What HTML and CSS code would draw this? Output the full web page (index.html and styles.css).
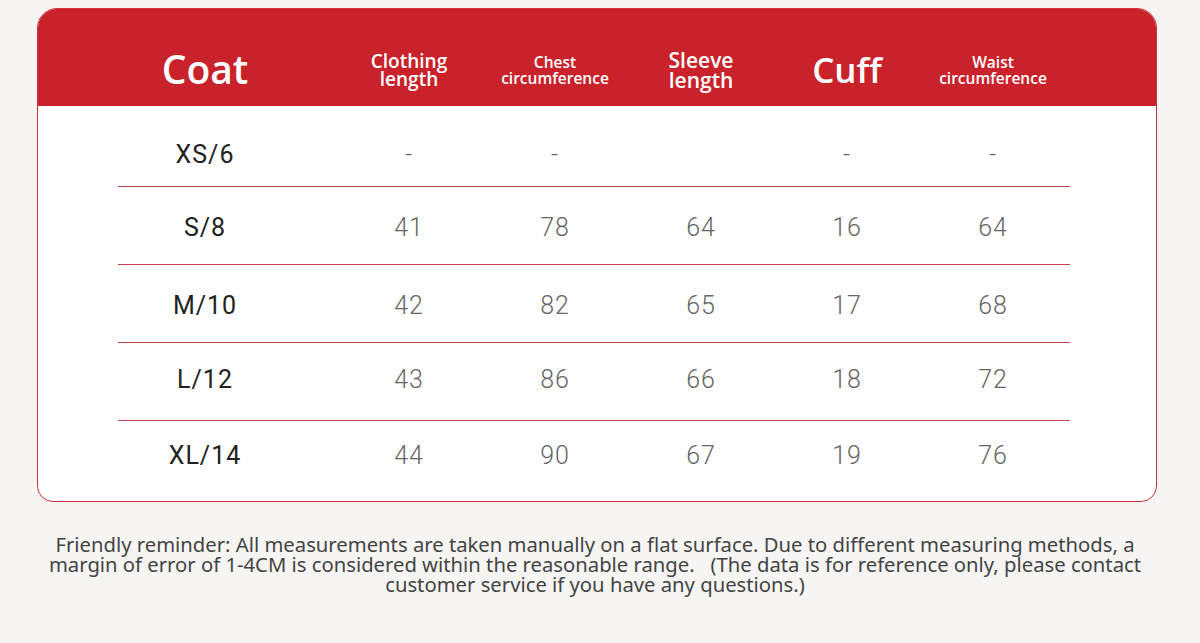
FILE: index.html
```html
<!DOCTYPE html>
<html lang="en">
<head>
<meta charset="utf-8">
<title>Coat size chart</title>
<link rel="stylesheet" href="styles.css">
</head>
<body>
<div class="card">
  <div class="head">
    <div class="hcell title">Coat</div>
    <div class="hcell h19">Clothing<br>length</div>
    <div class="hcell h16">Chest<br>circumference</div>
    <div class="hcell h20">Sleeve<br>length</div>
    <div class="hcell big">Cuff</div>
    <div class="hcell h16">Waist<br>circumference</div>
  </div>
  <div class="body">
    <div class="row r1"><div class="size">XS/6</div><div class="val">-</div><div class="val">-</div><div class="val"></div><div class="val">-</div><div class="val">-</div></div>
    <div class="row"><div class="size">S/8</div><div class="val">41</div><div class="val">78</div><div class="val">64</div><div class="val">16</div><div class="val">64</div></div>
    <div class="row"><div class="size">M/10</div><div class="val">42</div><div class="val">82</div><div class="val">65</div><div class="val">17</div><div class="val">68</div></div>
    <div class="row r4"><div class="size">L/12</div><div class="val">43</div><div class="val">86</div><div class="val">66</div><div class="val">18</div><div class="val">72</div></div>
    <div class="row last"><div class="size">XL/14</div><div class="val">44</div><div class="val">90</div><div class="val">67</div><div class="val">19</div><div class="val">76</div></div>
  </div>
</div>
<p class="note">Friendly reminder: All measurements are taken manually on a flat surface. Due to different measuring methods, a<br>margin of error of 1-4CM is considered within the reasonable range. &nbsp; (The data is for reference only, please contact<br>customer service if you have any questions.)</p>
</body>
</html>
```
FILE: styles.css
```css
html, body {
  margin: 0;
  padding: 0;
  background: #f6f5f3;
}
body {
  width: 1200px;
  height: 643px;
  overflow: hidden;
  font-family: "Noto Sans", "Open Sans", sans-serif;
}
.card {
  margin: 8px 43px 0 37px;
  border: 1px solid #d0303a;
  border-radius: 20px 20px 16px 16px;
  background: #ffffff;
  overflow: hidden;
}
.head {
  height: 97px;
  box-sizing: border-box;
  padding: 24px 0 0 80px;
  background: #c9222b;
  display: grid;
  grid-template-columns: 218px repeat(5, 146px);
  align-items: center;
  color: #fff;
  font-family: "Open Sans", "Noto Sans", sans-serif;
  font-weight: 600;
  text-align: center;
}
.hcell {
  line-height: 1;
}
.title {
  padding-right: 44px;
  font-size: 39px;
  margin-top: -2px;
}
.big {
  font-size: 35px;
}
.h19 { font-size: 19px; line-height: 18px; }
.h20 { font-size: 21px; line-height: 20px; }
.h16 { font-size: 15.5px; line-height: 16px; }
.body {
  padding: 3px 0 2px 80px;
}
.row {
  width: 952px;
  height: 78px;
  box-sizing: border-box;
  border-bottom: 1px solid #c8404a;
  display: grid;
  grid-template-columns: 218px repeat(5, 146px);
  align-items: center;
  text-align: center;
  font-family: "Roboto", sans-serif;
  font-size: 25px;
  padding-top: 3px;
}
.row.r1 {
  padding-top: 14px;
}
.row.r4 {
  padding-top: 0;
  padding-bottom: 4px;
}
.row.last {
  border-bottom: none;
  padding-top: 0;
  padding-bottom: 10px;
}
.size {
  padding-right: 44px;
  color: #222;
  font-weight: 400;
  letter-spacing: 1px;
}
.val {
  color: #666;
  font-weight: 300;
  letter-spacing: 1px;
}
.note {
  margin: 32px 0 0 0;
  text-align: center;
  width: 1190px;
  color: #444;
  font-family: "Noto Sans", sans-serif;
  font-size: 20.25px;
  line-height: 20px;
}
```
